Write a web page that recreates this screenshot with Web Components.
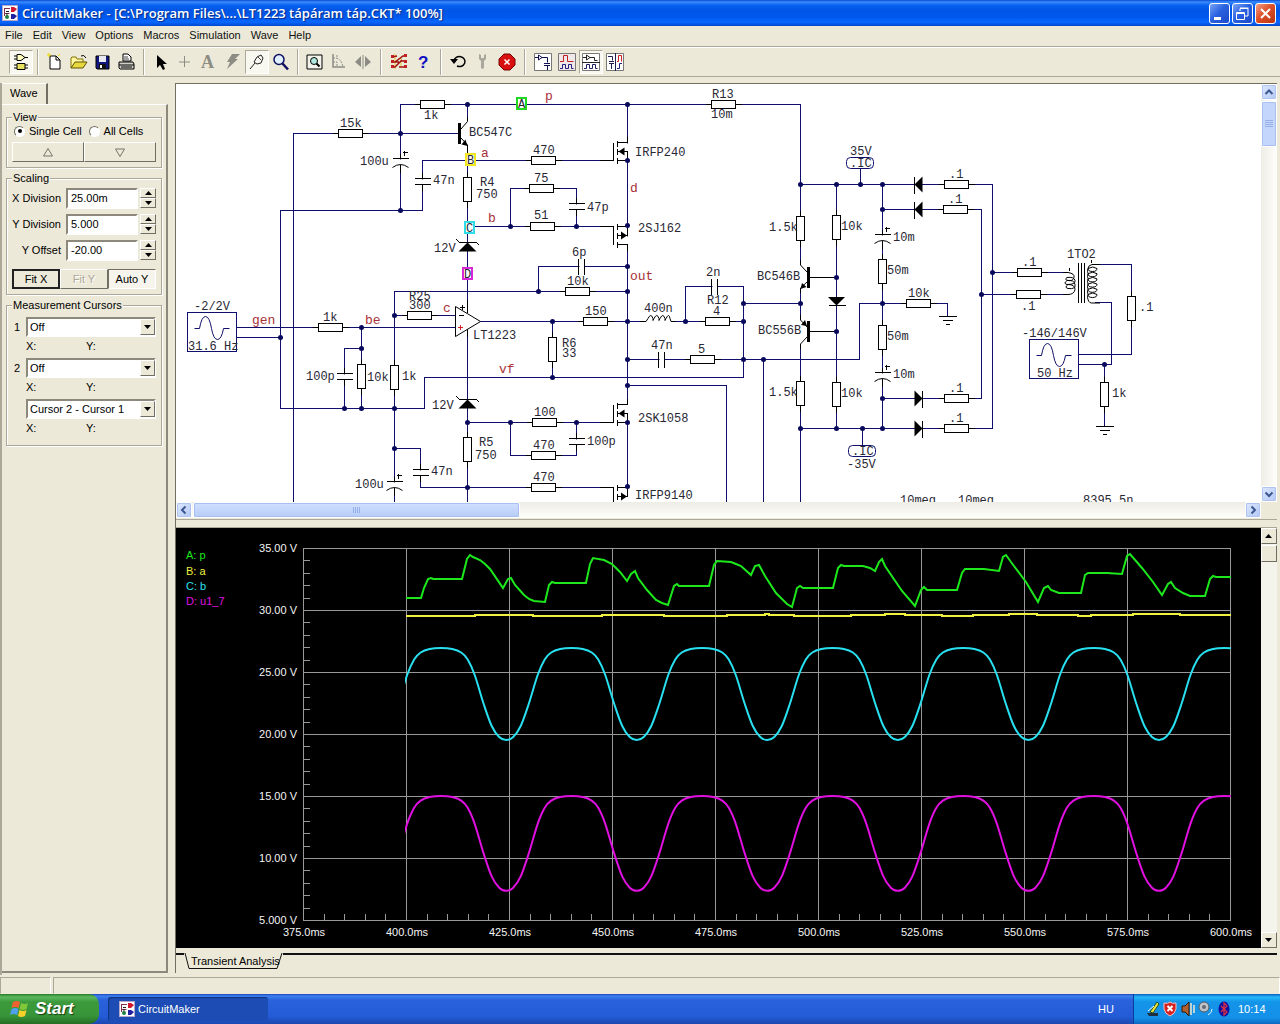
<!DOCTYPE html>
<html lang="en">
<head>
<meta charset="utf-8">
<title>CircuitMaker</title>
<style>
html,body{margin:0;height:100%}
body{font:11px "Liberation Sans",Arial,sans-serif;color:#000;background:#ece9d8;overflow:hidden}
</style>
</head>
<body>
<circuit-maker></circuit-maker>
<script>
const define=(name,html,setup)=>{
  const t=document.createElement('template');t.innerHTML=html;
  customElements.define(name,class extends HTMLElement{
    constructor(){super();this.attachShadow({mode:'open'}).appendChild(t.content.cloneNode(true));}
    connectedCallback(){if(setup&&!this.ready){this.ready=true;setup(this,this.shadowRoot);}}
  });
};
const LOGO='<rect x=".5" y=".5" width="15" height="15" fill="#fff" stroke="#b8a8c8"/><path d="M2 3.500h6M2.500 3v8M2.500 8.500h5" stroke="#803050" fill="none"/><path d="M5 11v-3M4 6.500h3" stroke="#222"/><path d="M9 2h3l3 2-3 3H9z" fill="#d01830"/><path d="M9 9h3l3 2-3 3H9z" fill="#2020a0"/><circle cx="5" cy="12" r="2" fill="#208040"/>';

/* ---------- title bar ---------- */
define('title-bar',`<style>
:host{display:flex;align-items:center;height:26px;flex:none;padding:0 4px 0 2px;box-sizing:border-box;gap:4px;color:#fff;
background:linear-gradient(#0a4ad0 0,#3a8cff 2px,#0a62f0 5px,#0055e5 10px,#0058ee 17px,#0868ff 22px,#0048cc 26px)}
svg{display:block}
h1{margin:0;flex:1;font:600 13px/20px "Open Sans","Liberation Sans",sans-serif;text-shadow:1px 1px 1px #0a2a80;white-space:nowrap}
div{display:flex;gap:2px}
button{width:21px;height:21px;padding:0;border:1px solid #fff;border-radius:3px;background:linear-gradient(135deg,#7aa4f6,#2a62e0 45%,#1a48c8)}
button.close{background:linear-gradient(135deg,#f0a088,#de5028 45%,#b83410)}
</style>
<svg width="16" height="16">${LOGO}</svg><h1>CircuitMaker - [C:\\Program Files\\...\\LT1223 tápáram táp.CKT* 100%]</h1>
<div><button aria-label="Minimize"><svg width="19" height="19"><path d="M4 13h7v3H4z" fill="#fff"/></svg></button>
<button aria-label="Restore"><svg width="19" height="19" fill="none" stroke="#fff"><path d="M7 7V4.500h8V12h-3M7 4h8.500"/><path d="M3.500 8.500h8v7h-8zM3.500 9.500h8"/></svg></button>
<button class="close" aria-label="Close"><svg width="19" height="19"><path d="M5 5l9 9M14 5l-9 9" stroke="#fff" stroke-width="2"/></svg></button></div>`);

/* ---------- menu ---------- */
define('menu-bar',`<style>
:host{display:block;flex:none;height:20px;border-bottom:1px solid #aca899;background:#ece9d8}
nav{display:flex;padding-left:1px}
button{border:0;background:none;font:11px/18px "Liberation Sans",Arial,sans-serif;padding:0 6px 0 4px;margin:0;color:#111}
</style><nav></nav>`,(h,r)=>{
  r.querySelector('nav').innerHTML=['File','Edit','View','Options','Macros','Simulation','Wave','Help'].map(s=>`<button>${s}</button>`).join('');
});

/* ---------- toolbar ---------- */
const ICONS={
logic:'<path d="M5 1.500h4l4 3-4 3H5zM2 3h3M2 6h3M13 4.500h3" fill="#ffffc0" stroke="#000"/><path d="M5 10.500h8v6H5zM2 12h3M2 15h3M13 12h3M13 15h3" fill="#e8e060" stroke="#000"/>',
file:'<path d="M4 3h6l4 4v9H4z" fill="#fff" stroke="#000"/><path d="M10 3v4h4" fill="none" stroke="#000"/><path d="M3 0v4M1 2h4M14 1l-2 2" stroke="#e8d800"/>',
open:'<path d="M1 15V5l1-1h4l1 2h6v3" fill="#fff8a0" stroke="#807000"/><path d="M1 15l4-6h12l-4 6z" fill="#e8d840" stroke="#605000"/><path d="M11 3q3-2 5 2" fill="none" stroke="#000"/>',
save:'<path d="M2 3h13v13H3l-1-1z" fill="#101880" stroke="#000"/><path d="M5 3h7v6H5z" fill="#e8e8f0"/><path d="M5 11h7v5H5z" fill="#111"/><path d="M6 12h2v3H6z" fill="#fff"/>',
print:'<path d="M5 8V1h5l3 3v4z" fill="#fff" stroke="#000"/><path d="M6 4h4M6 6h5" stroke="#444"/><path d="M1 9h14l1 2v5H2l-1-1z" fill="#d0d0c8" stroke="#000"/><path d="M1 12h15M3 14h11" stroke="#000"/>',
arrow:'<path d="M5 2v13l3-3 3 5 2-1-2-5h4z" fill="#000"/>',
plus:'<path d="M3 9h11M8.500 3v11" stroke="#8c8c84"/>',
text:'<text x="1" y="15" font-family="Liberation Serif" font-weight="bold" font-size="18" fill="#8c8c84">A</text>',
bolt:'<path d="M8 1h8l-5 5h3L3 16l3-7H3z" fill="#8c8c84"/>',
probe:'<path d="M2 16l5-6M6 9l3-5 4-2 2 3-2 5-4 1z" fill="#f8f8f0" stroke="#222"/><path d="M10 4l3 3" stroke="#444"/>',
zoom:'<circle cx="7" cy="6.500" r="5" fill="#e0f0ff" stroke="#101060" stroke-width="1.500"/><path d="M10.500 10.500l5.500 6" stroke="#101060" stroke-width="2.500"/>',
fit:'<path d="M1 2h15v14H1z" fill="#f4f4ec" stroke="#000"/><circle cx="8" cy="8" r="3.500" fill="#b0e8e0" stroke="#000"/><path d="M10.500 10.500l3 3" stroke="#000" stroke-width="2"/>',
rot:'<path d="M3 1v13h12" fill="none" stroke="#8c8c84" stroke-width="1.500"/><path d="M3 5q8-1 10 9M3 9h4v5M6 3h3" fill="none" stroke="#8c8c84" stroke-dasharray="2 1"/>',
flip:'<path d="M7 3v11l-6-5zM11 3v11l6-5z" fill="#8c8c84"/><path d="M9 2v14" stroke="#8c8c84"/>',
net:'<path d="M5 1v15M11 4v10" stroke="#e0c840"/><path d="M2 4l5-1M2 9h3l8-6h2M5 9l4 0M2 14h3l7-7M11 8h5M9 14h6" stroke="#a01010" fill="none" stroke-width="1.500"/><path d="M1 2h3v3H1zM1 7h3v3H1zM1 12h3v3H1zM14 1h3v3h-3zM14 7h3v3h-3zM14 12h3v3h-3z" fill="#c02020"/>',
help:'<text x="4" y="15" font-family="Liberation Sans" font-weight="bold" font-size="17" fill="#1010c0">?</text>',
reset:'<path d="M4 8a5.500 5 0 1 1 3 5" fill="none" stroke="#000" stroke-width="1.500"/><path d="M0 6h8l-4 5z" fill="#000"/>',
wrench:'<path d="M5 1v5l2 2v7l1.500 1 1.500-1V8l2-2V1l-2 1v3H7V2z" fill="#aaa89c"/>',
stop:'<path d="M6 1h6l5 5v6l-5 5H6l-5-5V6z" fill="#d81010" stroke="#700"/><path d="M6.500 6.500l5 5M11.500 6.500l-5 5" stroke="#fff" stroke-width="1.500"/>',
w1:'<path d="M.5.500h17v17H.5z" fill="#fff" stroke="#777"/><path d="M1 4.500h3M4.500 2v5l3.500-2.500zM8 4.500h5.500v5M10 10.500h6M10 12.500h6M13.500 13v4" stroke="#101050" fill="none"/>',
w2:'<path d="M.5.500h17v17H.5z" fill="#f0e8e8" stroke="#777"/><path d="M2 8.500h3.500v-6h4v6h6" stroke="#c02020" fill="none"/><path d="M2 15.500h2.500v-4h3v4h3v-4h3v4h2" stroke="#202080" fill="none"/>',
w3:'<path d="M.5.500h17v17H.5z" fill="#fff" stroke="#777"/><path d="M1 4.500h3M4.500 2v5l3.500-2.500zM8 4.500h4.500v3h3M0 9.500h18" stroke="#222" fill="none"/><path d="M2 15.500h2.500v-4h3v4h3v-4h3v4h2" stroke="#202060" fill="none"/>',
w4:'<path d="M.5.500h17v17H.5z" fill="#fff" stroke="#777"/><path d="M2 3.500h4.500v4M3 8.500h5M3 10.500h5M5.500 11v5M9.500 0v18" stroke="#202050" fill="none"/><path d="M11 8.500h1.500v-6h3v6" stroke="#d02020" fill="none"/><path d="M11 15.500h2.500v-5H16" stroke="#202080" fill="none"/>'};
define('tool-button',`<style>:host{display:block}button{width:24px;height:24px;padding:0;border:1px solid transparent;background:none;display:grid;place-items:center}
:host([pressed]) button{background:#f8f7f0;border-color:#aca899 #fff #fff #aca899}svg{display:block}</style><button><svg width="18" height="18" viewBox="0 0 18 18"></svg></button>`,(h,r)=>{
  r.querySelector('svg').innerHTML=ICONS[h.getAttribute('icon')];
  r.querySelector('button').setAttribute('aria-label',h.getAttribute('icon'));
});
define('tool-bar',`<style>:host{display:flex;flex:none;align-items:center;height:28px;padding-left:9px;border-top:1px solid #fff;border-bottom:1px solid #aca899;background:#ece9d8}
i{width:1px;height:26px;background:#aca899;border-right:1px solid #fff;margin:0 4px}i.wide{margin:0 5px}</style><slot></slot>`,(h,r)=>{
  const g=[['logic*'],['file','open','save','print'],['arrow','plus','text','bolt','probe*','zoom'],['fit','rot','flip'],['net','help'],['reset','wrench','stop'],['w1','w2','w3*','w4']];
  const s=document.createElement('template');
  s.innerHTML=g.map((a,i)=>(i?`<i class="${i>3?'wide':''}"></i>`:'')+a.map(n=>`<tool-button icon="${n.replace('*','')}" ${n.includes('*')?'pressed':''}></tool-button>`).join('')).join('');
  r.appendChild(s.content);
});

/* ---------- side panel ---------- */
define('group-box',`<style>:host{display:block}fieldset{margin:0;border:1px solid #aca899;box-shadow:1px 1px #fff,inset 1px 1px #fff;padding:0 5px 5px 5px;min-width:0}
legend{padding:0 1px;margin:0;line-height:13px;background:#ece9d8}</style><fieldset><legend></legend><slot></slot></fieldset>`,(h,r)=>{r.querySelector('legend').textContent=h.getAttribute('label');});
define('spin-field',`<style>:host{display:flex;align-items:center;height:22px;margin-bottom:4px}
label{flex:1;text-align:right;padding-right:5px;white-space:nowrap}
input{width:72px;height:21px;box-sizing:border-box;border:2px solid;border-color:#8c897c #fff #fff #8c897c;background:#fff;font:11px "Liberation Sans",Arial,sans-serif;padding:0 3px;margin:0 2px 0 0}
div{display:flex;flex-direction:column}
button{width:16px;height:10px;padding:0;border:1px solid;border-color:#fff #716f64 #716f64 #fff;background:#ece9d8;display:grid;place-items:center}svg{display:block}</style>
<label for="v"></label><input id="v"><div><button aria-label="Increase"><svg width="7" height="4"><path d="M0 4h7L3.500 0z"/></svg></button><button aria-label="Decrease"><svg width="7" height="4"><path d="M0 0h7L3.500 4z"/></svg></button></div>`,(h,r)=>{
  r.querySelector('label').textContent=h.getAttribute('label');r.querySelector('input').value=h.getAttribute('value');});
define('cursor-field',`<style>:host{display:block;height:41px}
div{display:grid;grid-template-columns:14px 1fr 16px;align-items:center}
label{grid-area:1/1;padding-left:2px}
select{grid-area:1/2/2/4;height:20px;width:100%;box-sizing:border-box;appearance:none;border:2px solid;border-color:#8c897c #fff #fff #8c897c;border-radius:0;background:#fff;font:11px "Liberation Sans",Arial,sans-serif;padding:0 2px;margin:0;color:#000}
span{grid-area:1/3;width:13px;height:14px;border:1px solid;border-color:#fff #716f64 #716f64 #fff;background:#ece9d8;display:grid;place-items:center;pointer-events:none}
p{margin:2px 0 0 14px;display:flex;line-height:15px}b{font-weight:normal;width:60px}svg{display:block}</style>
<div><label for="s"></label><select id="s"><option></option></select><span><svg width="7" height="4"><path d="M0 0h7L3.500 4z"/></svg></span></div><p><b>X:</b><b>Y:</b></p>`,(h,r)=>{
  r.querySelector('label').textContent=h.getAttribute('label')||'';r.querySelector('option').textContent=h.getAttribute('value');
  if(!h.getAttribute('label'))r.querySelector('select').setAttribute('aria-label','Difference');});
define('wave-panel',`<style>
:host{display:flex;flex-direction:column;width:168px;flex:none;box-sizing:border-box;border-left:2px solid #aca899}
.tab{align-self:flex-start;box-sizing:border-box;width:46px;height:21px;padding-left:8px;line-height:19px;border-top:1px solid #fff;border-right:2px solid #716f64}
.page{flex:1;border-right:2px solid #8c897c;border-bottom:2px solid #8c897c;border-top:1px solid #fff;padding:6px 4px 0 4px;margin-bottom:2px;display:flex;flex-direction:column;gap:4px}
.radios{display:flex;gap:5px;height:14px;align-items:center;margin:0 0 4px;white-space:nowrap}
.radios label{display:flex;align-items:center;gap:4px}
input[type=radio]{appearance:none;margin:0 0 0 2px;width:11px;height:11px;border-radius:50%;background:#fff;border:1px solid;border-color:#716f64 #fff #fff #716f64;display:grid;place-items:center}
input[type=radio]:checked::after{content:"";width:4px;height:4px;border-radius:50%;background:#000}
.row{display:grid;grid-auto-flow:column;grid-auto-columns:1fr}
.row button{height:20px;padding:0;border:1px solid;border-color:#fff #716f64 #716f64 #fff;background:#ece9d8;font:11px "Liberation Sans",Arial,sans-serif;color:#000;display:grid;place-items:center}
.row button.def{border:2px solid #222}.row button:disabled{color:#aca899;text-shadow:1px 1px #fff}
.row button.on{border-color:#716f64 #fff #fff #716f64;background:#f6f4ec}
.scal{padding-top:2px}.scal .row{padding-top:4px}.meas{padding-top:5px}
</style>
<div class="tab">Wave</div><div class="page">
<group-box label="View"><div class="radios"><label><input type="radio" name="v" checked>Single Cell</label><label><input type="radio" name="v">All Cells</label></div>
<div class="row"><button aria-label="Up"><svg width="10" height="9"><path d="M.5 8h9L5 .5z" fill="none" stroke="#77756a"/></svg></button><button aria-label="Down"><svg width="10" height="9"><path d="M.5 1h9L5 8.500z" fill="none" stroke="#77756a"/></svg></button></div></group-box>
<group-box label="Scaling"><div class="scal"><spin-field label="X Division" value="25.00m"></spin-field><spin-field label="Y Division" value="5.000"></spin-field><spin-field label="Y Offset" value="-20.00"></spin-field>
<div class="row"><button class="def">Fit X</button><button disabled>Fit Y</button><button class="on">Auto Y</button></div></div></group-box>
<group-box label="Measurement Cursors"><div class="meas"><cursor-field label="1" value="Off"></cursor-field><cursor-field label="2" value="Off"></cursor-field><cursor-field value="Cursor 2 - Cursor 1"></cursor-field></div></group-box>
</div>`);

/* ---------- scroll bars ---------- */
define('scroll-bar',`<style>
:host{display:flex;background:linear-gradient(90deg,#eeede5,#fefefb)}
:host([vertical]){flex-direction:column;width:16px}
:host([horizontal]){height:16px;background:linear-gradient(#eeede5,#fefefb)}
button{flex:none;width:16px;height:16px;padding:0;border:1px solid #fff;border-radius:2px;background:linear-gradient(135deg,#dce8ff,#b4c8f4);box-shadow:inset 0 0 0 1px #b0c4f0;display:grid;place-items:center}
.thumb{flex:none;border:1px solid #fff;box-shadow:inset 0 0 0 1px #a8c0f0;border-radius:2px;background:#c4d6fc;box-sizing:border-box;display:grid;place-items:center}
:host([horizontal]) .thumb{margin-left:1px;width:var(--thumb);background:linear-gradient(#d0e0ff,#b8ccf8)}
:host([vertical]) .thumb{margin-top:1px;height:var(--thumb)}
.space{flex:1}svg{display:block}.g{fill:none;stroke:#98b0e8}
:host([classic]){background:#f5f4ec}
:host([classic]) button,:host([classic]) .thumb{border:1px solid;border-color:#fff #716f64 #716f64 #fff;border-radius:0;background:#ece9d8;box-shadow:none}
:host([classic]) .g{display:none}
</style><button aria-label="Back"><svg width="10" height="10"></svg></button><div class="thumb"><svg class="g" width="8" height="8"></svg></div><div class="space"></div><button aria-label="Forward"><svg width="10" height="10"></svg></button>`,(h,r)=>{
  const v=h.hasAttribute('vertical'),c=h.hasAttribute('classic'),s=r.querySelectorAll('button svg');
  const d=c?['M1 7h7L4.500 3z','M1 3h7L4.500 7z']:v?['M1.500 7L5 3.500 8.500 7','M1.500 3.500L5 7l3.500-3.500']:['M6.500 1.500L3 5l3.500 3.500','M3.500 1.500L7 5 3.500 8.500'];
  s.forEach((e,i)=>e.innerHTML=`<path d="${d[i]}" ${c?'':'fill="none" stroke="#3c5890" stroke-width="2"'}/>`);
  r.querySelector('.g').innerHTML=`<path d="${v?'M0 .5h8M0 2.500h8M0 4.500h8M0 6.500h8':'M.5 1v6M2.500 1v6M4.500 1v6M6.500 1v6'}"/>`;
});

/* ---------- schematic ---------- */
const schematic=()=>{
  let w='',c='',t='';
  const W=(...p)=>{w+=`<polyline points="${p.join(' ')}"/>`;};
  const N=(...p)=>{for(let i=0;i<p.length;i+=2)c+=`<circle class="n" cx="${p[i]}" cy="${p[i+1]}" r="2.500"/>`;};
  const L=d=>{c+=`<path class="k" d="${d}"/>`;};
  const F=d=>{c+=`<path class="f" d="${d}"/>`;};
  const RH=(x,y)=>{L(`M${x-18} ${y}h36`);c+=`<rect class="r" x="${x-12}" y="${y-4}" width="24" height="8"/>`;};
  const RV=(x,y)=>{L(`M${x} ${y-18}v36`);c+=`<rect class="r" x="${x-4}" y="${y-12}" width="8" height="24"/>`;};
  const blank=(x,y,a,b)=>{c+=`<rect fill="#fff" x="${x}" y="${y}" width="${a}" height="${b}"/>`;};
  const CV=(x,y)=>{blank(x-2,y+1,4,5);L(`M${x-8} ${y}h16M${x-8} ${y+6}h16M${x} ${y-6}v6M${x} ${y+6}v6`);};
  const CH=(x,y)=>{blank(x+1,y-2,5,4);L(`M${x} ${y-8}v16M${x+6} ${y-8}v16`);};
  const CE=(x,y)=>{blank(x-2,y+1,4,5);L(`M${x-8} ${y}h16M${x} ${y-5}v5M${x} ${y+6}v8M${x+2} ${y-6}h5M${x+4} ${y-8}v5`);c+=`<path class="s" d="M${x-8} ${y+9}q8-6 16 0"/>`;};
  const ZD=(x,y)=>{F(`M${x} ${y}l9 9h-18z`);L(`M${x-11} ${y-3}l3 3h17l3 3`);};
  const DL=(x,y)=>{F(`M${x} ${y}l8-8v16z`);L(`M${x} ${y-8}v17`);};
  const DR=(x,y)=>{F(`M${x+8} ${y}l-8-8v16z`);L(`M${x+8} ${y-8}v17`);};
  const GND=(x,y)=>L(`M${x-9} ${y}h18M${x-5} ${y+4}h10M${x-2} ${y+8}h4`);
  const T=(x,y,s,k='')=>{t+=`<text x="${x}" y="${y}" class="${k}">${s}</text>`;};
  /* n-channel: y is the source row; p-channel: y is the top row */
  const MN=y=>{blank(626,y-17,3,8);L(`M600 ${y}h13.500v-18M617.500 ${y-20}v6M617.500 ${y-12}v6M617.500 ${y-3}v6M617.500 ${y-18}h10v-6M617.500 ${y-9}h10v9h-10`);F(`M618.500 ${y-9}l6-4v8z`);N(627.5,y);};
  const MP=y=>{blank(626,y+10,3,8);L(`M600 ${y}h13.500v18M617.500 ${y-3}v6M617.500 ${y+6}v6M617.500 ${y+15}v6M617.500 ${y}h10v9h-10M617.500 ${y+18}h10v6`);F(`M627 ${y+9}l-6-4v8z`);N(627.5,y-1);};

  W(293.5,502,293.5,133.5,459,133.5);W(400.5,133.5,400.5,104.5,800.5,104.5,800.5,184.5,914,184.5);
  W(467.5,104.5,467.5,121);W(400.5,133.5,400.5,210.5);W(470,160.5,422.5,160.5,422.5,210.5,280.5,210.5,280.5,408.5,424.5,408.5,424.5,377.5,743.5,377.5,743.5,286.5,685.5,286.5,685.5,321.5);
  W(467.5,160.5,467.5,311);W(467.5,333,467.5,502);W(476,160.5,613,160.5);W(475,226.5,613,226.5);
  W(510.5,226.5,510.5,188.5,576.5,188.5,576.5,226.5);W(627.5,104.5,627.5,405);W(627.5,422.5,627.5,487);
  W(627.5,266.5,538.5,266.5,538.5,291.5);W(627.5,291.5,394.5,291.5,394.5,502);
  W(394.5,315.5,455,315.5);W(236,327.5,455,327.5);W(236,337.5,280.5,337.5);
  W(361.5,327.5,361.5,408.5);W(361.5,348.5,344.5,348.5,344.5,408.5);
  W(480,321.5,743.5,321.5);W(552.5,321.5,552.5,377.5);W(627.5,359.5,859.5,359.5,859.5,303.5,947.5,303.5,947.5,316);
  W(627.5,385.5,726.5,385.5,726.5,502);W(763.5,359.5,763.5,502);W(743.5,303.5,800.5,303.5);
  W(467.5,422.5,613,422.5);W(510.5,422.5,510.5,455.5,576.5,455.5,576.5,422.5);W(394.5,448.5,420.5,448.5,420.5,487.5,613,487.5);
  W(800.5,184.5,800.5,265);W(800.5,288,800.5,320);W(800.5,344,800.5,502);W(836.5,184.5,836.5,428.5);
  W(860.5,169,860.5,184.5);W(862.5,428.5,862.5,445);W(882.5,184.5,882.5,428.5);W(800.5,428.5,992.5,428.5,992.5,184.5,914,184.5);
  W(882.5,209.5,981.5,209.5,981.5,398.5,882.5,398.5);W(992.5,272.5,1068,272.5);W(981.5,294.5,1068,294.5);
  W(1097,264.5,1131.5,264.5,1131.5,354.5,1078,354.5);W(1095,302.5,1111.5,302.5,1111.5,364.5,1078,364.5);W(1104.5,364.5,1104.5,426);

  for(const [x,y] of [[432.5,104.5],[350.5,133.5],[723.5,104.5],[543.5,160.5],[541.5,188.5],[542.5,226.5],[577.5,291.5],[330.5,327.5],[419.5,315.5],[595.5,321.5],[717.5,321.5],[702.5,359.5],[544.5,422.5],[543.5,455.5],[543.5,487.5],[956.5,184.5],[955.5,209.5],[956.5,398.5],[956.5,428.5],[918.5,303.5],[1029.5,272.5],[1028.5,294.5]])RH(x,y);
  for(const [x,y] of [[467.5,189.5],[361.5,376.5],[394.5,377.5],[552.5,349.5],[467.5,449.5],[800.5,228.5],[836.5,227.5],[882.5,271.5],[882.5,337.5],[800.5,393.5],[836.5,394.5],[1131.5,308.5],[1104.5,394.5]])RV(x,y);
  CE(400.5,158.5);CE(394.5,481.5);CE(882.5,234.5);CE(882.5,372.5);
  CV(422.5,178.5);CV(576.5,203.5);CV(344.5,373.5);CV(576.5,438.5);CV(420.5,469.5);
  CH(578.5,266.5);CH(711.5,286.5);CH(658.5,359.5);
  ZD(467.5,242.5);ZD(467.5,399.5);
  DL(914.5,184.5);DL(914.5,209.5);DR(914.5,398.5);DR(914.5,428.5);
  F('M828 297h17l-8.500 8.500z');L('M828.500 305.500h17');
  GND(947.5,316.5);GND(1104.5,426.5);
  F('M458 123h3v21h-3z');c+='<path class="s" d="M461 129l6.500-7.500v-4M461 138l6.500 7v9"/>';F('M467.500 146l-6-1.500 4-5z');
  F('M807 267h3v21h-3z');L('M810 277.500h26');c+='<path class="s" d="M807 272l-6.500-7v-5M807 282l-6.500 6v5"/>';F('M800.500 289l1.500-6 4.500 4z');
  F('M807 321h3v21h-3z');L('M810 331.500h26');c+='<path class="s" d="M807 327l-6.500-7v-5M807 337l-6.500 7v5"/>';F('M807 326l-6-1 4-5z');
  MN(160.5);MP(226.5);MN(422.5);MP(487.5);
  c+='<path class="s" style="fill:#fff" d="M455.500 306.500v30l25-15z"/>';
  L('M459 315.500h5M460 307.500h5M462.500 305v5M467.500 300v13M467.500 329v8');c+='<path d="M458 327.500h5M460.500 325v5" stroke="#d02020" fill="none"/>';
  blank(646,319,25,4);c+='<path class="s" d="M640 321.500h6l2-3q3-6 5 0v2l1-2q3-6 5 0v2l1-2q3-6 5 0v2l1-2q3-6 4 0l1 3h5"/>';
  c+='<path class="s" d="M1063 272.500h5q7 1 6 5t-6 3q-4-1-1-3 7-1 8 3t-8 4q-4-1 0-4 7-1 8 4t-7 4q-4-1 0-4 7 0 7 5-1 5-7 5h-5"/>';
  L('M1078.500 263v40M1081.500 263v40M1084.500 263v40M1069.500 268v3M1091.500 260v3');
  let coil='M1100 264.500h-8q-4 1-4 4';for(let i=0;i<6;i++){const y=268.5+i*5.2;coil+=`M1088 ${y}q0 3 4.500 3t4.500-3q-4-3-9 0q-1 3 0 5`;}
  c+=`<path class="s" d="${coil}q1 4 5 3.500h7"/>`;
  for(const [x,y] of [[187.5,312.5],[1029.5,339.5]])c+=`<rect class="b" x="${x}" y="${y}" width="49" height="39"/><path class="v" d="M${x+7} ${y+16}h5q2-12 6-12t6 12q2 11 6 11t6-11h6"/>`;
  for(const [x,y] of [[846.5,157.5],[848.5,445.5]])c+=`<rect class="b" x="${x}" y="${y}" width="27" height="11" rx="4"/>`;
  N(467.5,104.5,400.5,133.5,400.5,210.5,627.5,104.5,510.5,226.5,576.5,226.5,627.5,266.5,538.5,291.5,627.5,291.5,280.5,337.5,361.5,327.5,361.5,348.5,344.5,408.5,361.5,408.5,394.5,408.5,394.5,315.5,394.5,448.5,552.5,321.5,552.5,377.5,627.5,321.5,685.5,321.5,627.5,359.5,627.5,385.5,467.5,422.5,510.5,422.5,576.5,422.5,467.5,487.5,743.5,303.5,743.5,321.5,743.5,359.5,763.5,359.5,800.5,303.5,800.5,184.5,836.5,184.5,860.5,184.5,882.5,184.5,882.5,209.5,836.5,277.5,836.5,331.5,882.5,303.5,882.5,398.5,882.5,428.5,862.5,428.5,836.5,428.5,800.5,428.5,992.5,272.5,981.5,294.5,1104.5,364.5);
  for(const [x,y,s,k] of [[521.5,103.5,'A','#20d820'],[470.5,159.5,'B','#f0e820'],[469.5,227.5,'C','#30dce8'],[467.5,273.5,'D','#d828d8']]){
    c+=`<rect x="${x-4.5}" y="${y-5.5}" width="9" height="11" fill="#fff" stroke="${k}" stroke-width="2"/>`;T(x-3.5,y+4,s);}
  const labels=[[340,127,'15k'],[424,119,'1k'],[360,165,'100u'],[433,184,'47n'],[469,136,'BC547C'],[533,154,'470'],[480,186,'R4'],[476,198,'750'],[534,182,'75'],[587,211,'47p'],[534,219,'51'],[434,252,'12V'],[635,156,'IRFP240'],[638,232,'2SJ162'],[572,256,'6p'],[567,285,'10k'],[712,98,'R13'],[711,118,'10m'],[850,155,'35V'],[850,167,'.IC'],[949,178,'.1'],[948,203,'.1'],[769,231,'1.5k'],[841,230,'10k'],[893,241,'10m'],[887,274,'50m'],[757,280,'BC546B'],[706,276,'2n'],[707,304,'R12'],[713,315,'4'],[908,297,'10k'],[887,340,'50m'],[893,378,'10m'],[758,334,'BC556B'],[769,396,'1.5k'],[841,397,'10k'],[949,392,'.1'],[949,422,'.1'],[852,455,'.IC'],[847,468,'-35V'],[900,504,'10meg'],[958,504,'10meg'],[1083,504,'8395.5n'],[1067,258,'1TO2'],[1022,266,'.1'],[1021,310,'.1'],[1139,311,'.1'],[1112,397,'1k'],[1022,337,'-146/146V'],[1037,377,'50 Hz'],[194,310,'-2/2V'],[188,350,'31.6 Hz'],[323,321,'1k'],[306,380,'100p'],[367,381,'10k'],[402,380,'1k'],[432,409,'12V'],[409,300,'R25'],[409,309,'300'],[431,475,'47n'],[355,488,'100u'],[473,339,'LT1223'],[585,315,'150'],[644,312,'400n'],[562,347,'R6'],[562,357,'33'],[651,349,'47n'],[698,353,'5'],[638,422,'2SK1058'],[479,446,'R5'],[475,459,'750'],[534,416,'100'],[533,449,'470'],[587,445,'100p'],[533,481,'470'],[635,499,'IRFP9140']];
  labels.forEach(a=>T(...a));
  for(const a of [[545,100,'p'],[481,157,'a'],[488,222,'b'],[630,192,'d'],[630,280,'out'],[443,312,'c'],[365,324,'be'],[252,324,'gen'],[499,373,'vf']])T(...a,'net');
  return `<g class="w">${w}</g><g>${c}</g><g>${t}</g>`;
};
define('circuit-view',`<style>
:host{display:block;background:#fff;overflow:hidden;min-width:0;min-height:0}svg{display:block;width:100%;height:100%}
.w{fill:none;stroke:#10106c;shape-rendering:crispEdges}.k{fill:none;stroke:#000;shape-rendering:crispEdges}.s{fill:none;stroke:#000}.f{fill:#000}
.r{fill:#fff;stroke:#000;shape-rendering:crispEdges}.n{fill:#08085c}.b{fill:#fff;stroke:#10106c}.v{fill:none;stroke:#10106c}
text{font:12px "Liberation Mono","Courier New",monospace;fill:#282834;white-space:pre}text.net{font-size:13px;fill:#a83038}
</style><svg><g transform="translate(-176 -84)"></g></svg>`,(h,r)=>{r.querySelector('g').innerHTML=schematic();});

/* ---------- chart ---------- */
const smooth=p=>{let d=`M${p[0]}`;for(let i=0;i<p.length-1;i++){const a=p[i-1]||p[i],b=p[i],c=p[i+1],e=p[i+2]||c;
  d+=`C${b[0]+(c[0]-a[0])/6} ${b[1]+(c[1]-a[1])/6} ${c[0]-(e[0]-b[0])/6} ${c[1]-(e[1]-b[1])/6} ${c}`;}return d;};
const chart=()=>{
  let s='<g stroke="#989898" shape-rendering="crispEdges">';
  const P=(x1,y1,x2,y2)=>s+=`<path d="M${x1} ${y1}L${x2} ${y2}"/>`;
  for(let i=0;i<7;i++)P(303,548.5+62*i,1231,548.5+62*i);
  for(let i=0;i<10;i++)if(i!==0||true)P(303.5+103*i,548,303.5+103*i,921);
  for(let i=1;i<30;i++)P(303,Math.round(548+12.4*i)+.5,310,Math.round(548+12.4*i)+.5);
  for(let i=1;i<45;i++)P(Math.round(303+20.6*i)+.5,914,Math.round(303+20.6*i)+.5,921);
  s+='</g><clipPath id="c"><rect x="405" y="540" width="826" height="390"/></clipPath><g clip-path="url(#c)" fill="none" stroke-width="2">';
  const green='406,598 421,598 424,588 428,579 431,578 433,579 462,579 467,559 470,555 473,557 480,560 485,564 490,569 503,588 508,579 511,578 515,585 524,595 529,599 534,601 545,602 549,585 552,582 555,583 586,583 590,564 593,558 604,560 612,564 620,572 627,581 631,574 635,571 638,578 647,590 656,600 662,603 668,605 674,586 677,584 679,586 709,586 714,565 717,561 731,562 736,564 741,566 751,575 755,566 759,565 765,576 776,593 787,604 792,607 797,588 800,586 803,588 833,588 838,568 841,565 844,566 863,566 870,568 875,571 879,562 882,559 885,566 902,591 915,606 921,590 924,587 927,590 957,590 962,573 965,569 984,569 999,571 1003,557 1006,555 1011,562 1026,582 1038,602 1044,588 1048,586 1051,590 1059,593 1081,593 1085,575 1088,573 1107,573 1122,574 1127,556 1130,554 1142,568 1153,582 1162,595 1168,584 1171,582 1175,588 1183,593 1190,596 1205,596 1210,579 1213,576 1216,577 1231,577';
  s+=`<polyline stroke="#1ce81c" points="${green}"/>`;
  const ys=[[475,615],[533,616],[602,615],[664,616],[727,615],[765,614],[769,615],[794,616],[851,615],[885,614],[905,615],[942,616],[973,615],[1009,614],[1037,615],[1078,616],[1091,615],[1133,614],[1180,615]];
  let d='M406 616';ys.forEach(([x,y])=>d+=`H${x}V${y}`);s+=`<path stroke="#f0f040" shape-rendering="crispEdges" d="${d}H1231"/>`;
  const half=[[0,740],[7,737],[14.5,726],[22.5,704],[31.5,675],[38.5,659.5],[45,652.5],[54,649],[65.3,648]],pts=[];
  for(let k=-1;k<7;k++){const m=506.2+130.55*k;
    for(let i=7;i>0;i--)pts.push([m-half[i][0],half[i][1]]);
    for(const q of half)pts.push([m+q[0],q[1]]);}
  s+=`<path stroke="#28e0f0" d="${smooth(pts)}"/>`;
  s+=`<path stroke="#e010e0" d="${smooth(pts.map(([x,y])=>[x,796+(y-648)*1.03]))}"/></g>`;
  ['35.00','30.00','25.00','20.00','15.00','10.00','5.000'].forEach((v,i)=>s+=`<text x="297" y="${552+62*i}" text-anchor="end">${v} V</text>`);
  for(let i=0;i<10;i++)s+=`<text x="${304+103*i}" y="936" text-anchor="middle">${375+25*i}.0ms</text>`;
  [['A: p','#1ce81c',559],['B: a','#f0f040',575],['C: b','#28e0f0',590],['D: u1_7','#e010e0',605]].forEach(([a,k,y])=>s+=`<text x="186" y="${y}" style="fill:${k}">${a}</text>`);
  return s;
};
define('wave-chart',`<style>:host{display:block;background:#000;overflow:hidden;min-width:0;min-height:0}svg{display:block;width:100%;height:100%}text{font:11px "Liberation Sans",Arial,sans-serif;fill:#f4f4f4}</style><svg><g id="g" transform="translate(-176 -528)"></g></svg>`,(h,r)=>{r.getElementById('g').innerHTML=chart();});

/* ---------- work area ---------- */
define('work-area',`<style>
:host{display:flex;flex-direction:column;flex:1;min-width:0;border-left:1px solid #716f64;margin-left:7px;padding-right:3px;margin-bottom:2px}
.top{display:grid;grid-template-columns:1fr 16px;grid-template-rows:1fr 16px;height:434px;flex:none;border-top:1px solid #716f64}
.split{height:7px;flex:none;border-top:1px solid #aca899;border-bottom:1px solid #aca899;margin:1px 0 0}
.bottom{display:grid;grid-template-columns:1fr 16px;flex:1;min-height:0}
.corner{background:#ece9d8}
.tabs{height:20px;flex:none;padding-top:5px}
.strip{display:grid;grid-template-columns:8px 99px 1fr;height:17px}
.strip i{border-top:2px solid #111;height:0}
button{border:0;padding:0 0 0 7px;background:none;text-align:left;font:11px/15px "Liberation Sans",Arial,sans-serif;grid-area:1/2;white-space:nowrap}
.strip svg{display:block;grid-area:1/2}.strip i:last-child{grid-column:3}
</style>
<div class="top"><circuit-view></circuit-view><scroll-bar vertical style="--thumb:46px"></scroll-bar><scroll-bar horizontal style="--thumb:327px"></scroll-bar><div class="corner"></div></div>
<div class="split"></div>
<div class="bottom"><wave-chart></wave-chart><scroll-bar vertical classic style="--thumb:17px"></scroll-bar></div>
<div class="tabs"><div class="strip"><i></i><svg width="99" height="17"><path d="M1 0l4 15.500h88L98 0" fill="none" stroke="#111"/></svg><button>Transient Analysis</button><i></i></div></div>`);

define('status-bar',`<style>:host{display:flex;gap:2px;flex:none;height:19px;box-sizing:border-box;padding-top:2px}i{width:49px;border:1px solid;border-color:#aca899 #fff #ece9d8 #aca899}i+i{flex:1}</style><i></i><i></i>`);

/* ---------- task bar ---------- */
define('task-bar',`<style>
:host{display:flex;flex:none;height:30px;align-items:stretch;color:#fff;background:linear-gradient(#1c44b4 0,#3c80f0 2px,#2a62dc 6px,#245cd8 22px,#1c48b0 30px)}
button{border:0;padding:0;color:#fff;display:flex;align-items:center}
.start{width:99px;gap:5px;padding-left:10px;font:italic bold 17px "Liberation Sans",Arial,sans-serif;text-shadow:1px 1px 1px #143c10;border-radius:0 10px 10px 0;background:linear-gradient(#2c7c2c 0,#5cb85c 3px,#3c9a3c 8px,#389438 22px,#246c24 30px)}
.task{width:160px;margin:3px 0 3px 9px;padding-left:11px;gap:3px;border-radius:3px;font:11px "Liberation Sans",Arial,sans-serif;background:#1c4cb4;box-shadow:inset 1px 1px 1px #12347c}
.gap{flex:1}.lang{align-self:center;margin-right:19px}
.tray{display:flex;align-items:center;flex:none;padding-left:12px;box-sizing:border-box;width:147px;gap:5px;border-left:1px solid #0c3c98;background:linear-gradient(#0c5cc0 0,#24b8f8 3px,#1494e8 8px,#1490e8 24px,#0c68c0 30px)}
svg{display:block}.tray>svg{flex:none}
</style>
<button class="start"><svg width="20" height="18" viewBox="0 0 20 18"><path d="M3 2q4-2 7 0L8.500 8q-4-2-7 0z" fill="#f06030"/><path d="M11 3q4 2 7 0l-1.500 6q-4 2-7 0z" fill="#80c838"/><path d="M1.500 9q4-2 7 0L7 15q-4-2-7 0z" fill="#50a0f0"/><path d="M9.500 10q4 2 7 0L15 16q-4 2-7 0z" fill="#f8d028"/></svg>Start</button>
<button class="task"><svg width="16" height="16">${LOGO}</svg>CircuitMaker</button>
<span class="gap"></span><span class="lang">HU</span>
<div class="tray"><svg width="87" height="16" viewBox="0 0 87 16">
<path d="M1 12h11v3H3z" fill="#203040"/><path d="M4 11l7-10 2 2-6 9z" fill="#f0e040" stroke="#205020"/><path d="M2 10l6-5" stroke="#fff"/>
<path d="M18 2q4 1 6-1 2 2 6 1v6q-1 5-6 7-5-2-6-7z" fill="#d82020" stroke="#f0c0c0"/><path d="M21.500 5l5 5M26.500 5l-5 5" stroke="#fff" stroke-width="2"/>
<path d="M36 5h3l4-4v14l-4-4h-3z" fill="#b06030" stroke="#301808"/><path d="M45 2v12M48 4v8" stroke="#f0e8d0" stroke-width="1.500"/>
<circle cx="58" cy="6" r="5" fill="#c0c4c8" stroke="#505860"/><circle cx="58" cy="6" r="2" fill="#606870"/><path d="M62 14q4-2 4-6" stroke="#e0f0ff" fill="none"/>
<ellipse cx="78" cy="8" rx="5.500" ry="7.500" fill="#1010a0"/><path d="M75 5l6 6-3 3V2l3 3-6 6" stroke="#e03040" fill="none" stroke-width="1.200"/></svg><span>10:14</span></div>`);

define('circuit-maker',`<style>:host{display:flex;flex-direction:column;height:100vh;background:#ece9d8}main{display:flex;flex:1;min-height:0;padding-top:6px}</style>
<title-bar></title-bar><menu-bar></menu-bar><tool-bar></tool-bar><main><wave-panel></wave-panel><work-area></work-area></main><status-bar></status-bar><task-bar></task-bar>`);
</script>
</body>
</html>
